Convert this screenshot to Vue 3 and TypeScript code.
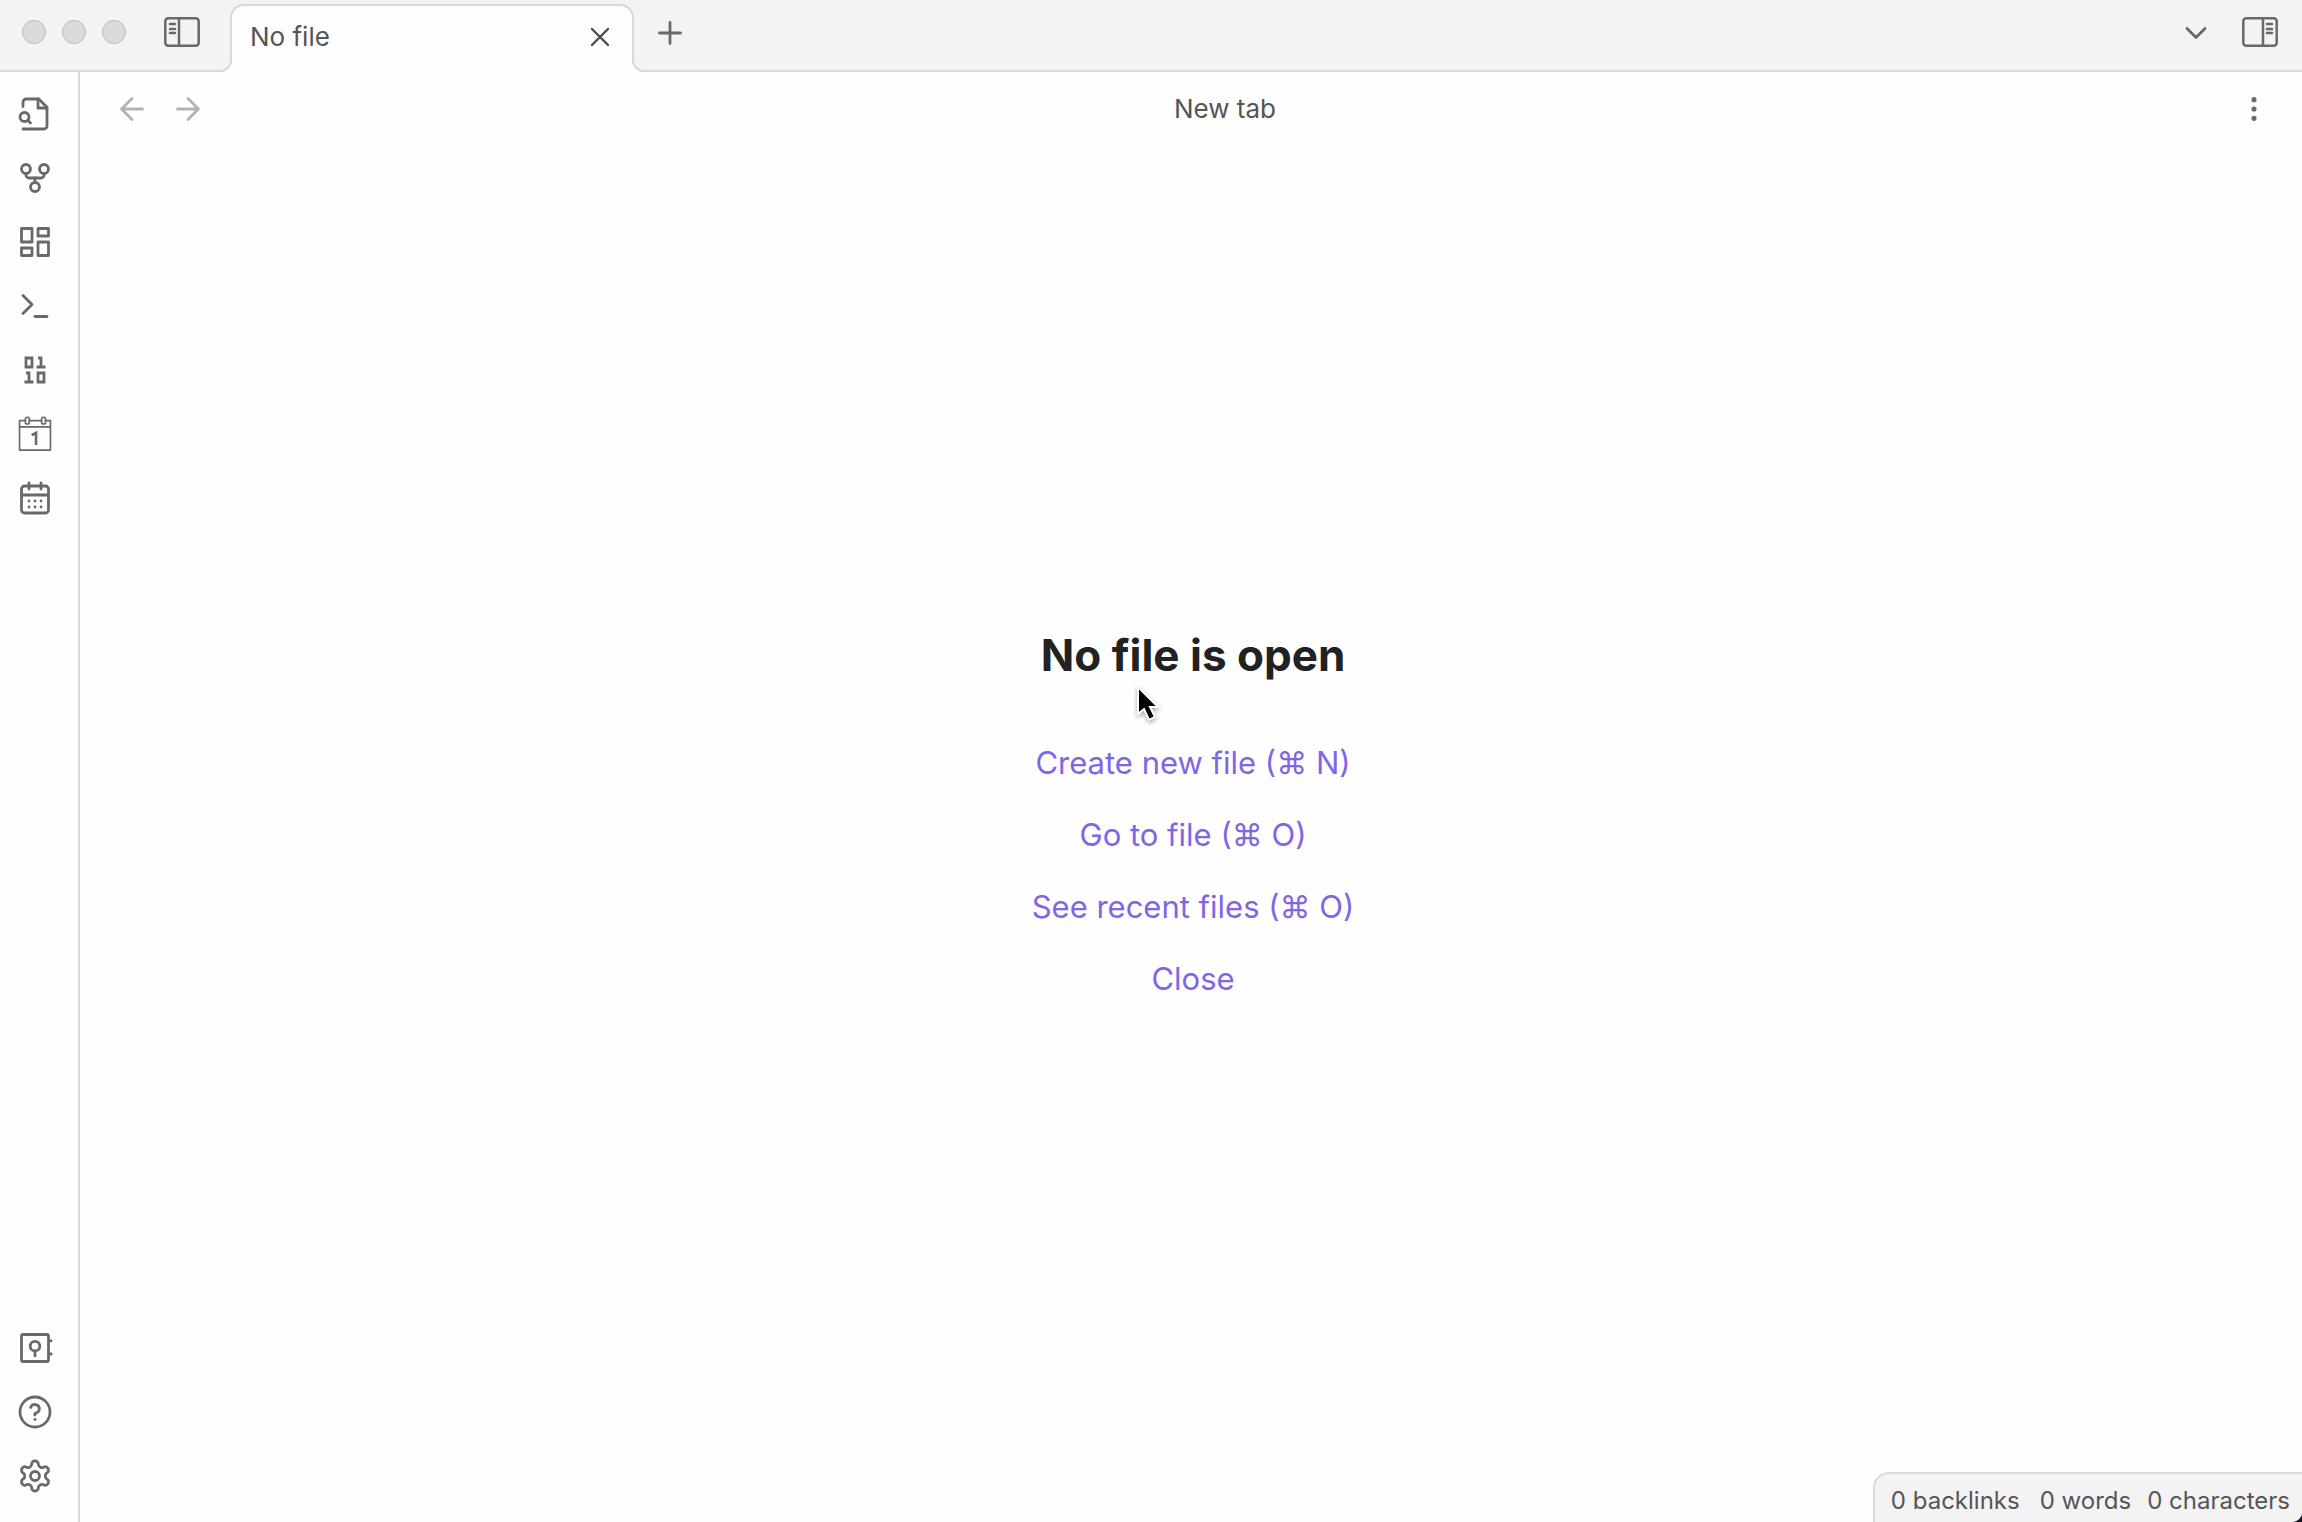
<script setup lang="ts">
interface RibbonAction {
  label: string
  shapes: string
}

const ribbonTop: RibbonAction[] = [
  {
    label: 'Open quick switcher',
    shapes:
      '<path d="M4 22h14a2 2 0 0 0 2-2V7.5L14.5 2H6a2 2 0 0 0-2 2v3"/><path d="M14 2v6h6"/><circle cx="5" cy="14" r="3"/><path d="M9 18l-1.5-1.5"/>',
  },
  {
    label: 'Open graph view',
    shapes:
      '<circle cx="12" cy="18" r="3"/><circle cx="6" cy="6" r="3"/><circle cx="18" cy="6" r="3"/><path d="M18 9v1a2 2 0 0 1-2 2H8a2 2 0 0 1-2-2V9"/><path d="M12 12v3"/>',
  },
  {
    label: 'Create new canvas',
    shapes:
      '<path d="M3 3h7v9H3zM14 3h7v5h-7zM14 12h7v9h-7zM3 16h7v5H3z"/>',
  },
  {
    label: 'Open command palette',
    shapes: '<path d="M4 17l6-6-6-6"/><path d="M12 19h8"/>',
  },
  {
    label: 'Templates',
    shapes:
      '<path stroke-linecap="butt" stroke-linejoin="miter" d="M14 14h4v6h-4zM6 4h4v6H6zM5 20h6M13 10h6M6 14h2v6M14 4h2v6"/>',
  },
  {
    label: "Open today's daily note",
    shapes:
      '<g stroke-width="1.1"><path d="M5.4 3.1H1.7v19.6h20.6V3.1h-3.2M8.2 3.1h8.2"/><path d="M1.7 7.2h20.6"/><rect x="5.6" y="0.8" width="2.6" height="4.5" rx="1.2"/><rect x="16.4" y="0.8" width="2.6" height="4.5" rx="1.2"/></g><path stroke-linecap="butt" stroke-width="1.7" stroke-linejoin="miter" d="M9.8 12.8l2.9-1.6V19.3"/>',
  },
  {
    label: 'Calendar',
    shapes:
      '<rect x="3" y="4" width="18" height="18" rx="2"/><path d="M16 2v4M8 2v4M3 10h18M8 14h.01M12 14h.01M16 14h.01M8 18h.01M12 18h.01M16 18h.01"/>',
  },
]

const ribbonBottom: RibbonAction[] = [
  {
    label: 'Open another vault',
    shapes:
      '<rect x="3" y="3" width="18" height="18" rx="1"/><circle cx="12" cy="10.8" r="3.2"/><path d="M12 14v3.3M22 7.2h.8M22 16h.8"/>',
  },
  {
    label: 'Help',
    shapes:
      '<circle cx="12" cy="12" r="10"/><path d="M9.09 9a3 3 0 0 1 5.83 1c0 2-3 3-3 3v1"/><path d="M12 17h.01"/>',
  },
  {
    label: 'Settings',
    shapes:
      '<path d="M12.22 2h-.44a2 2 0 0 0-2 2v.18a2 2 0 0 1-1 1.73l-.43.25a2 2 0 0 1-2 0l-.15-.08a2 2 0 0 0-2.73.73l-.22.38a2 2 0 0 0 .73 2.73l.15.1a2 2 0 0 1 1 1.72v.51a2 2 0 0 1-1 1.74l-.15.09a2 2 0 0 0-.73 2.73l.22.38a2 2 0 0 0 2.73.73l.15-.08a2 2 0 0 1 2 0l.43.25a2 2 0 0 1 1 1.73V20a2 2 0 0 0 2 2h.44a2 2 0 0 0 2-2v-.18a2 2 0 0 1 1-1.73l.43-.25a2 2 0 0 1 2 0l.15.08a2 2 0 0 0 2.73-.73l.22-.39a2 2 0 0 0-.73-2.73l-.15-.08a2 2 0 0 1-1-1.74v-.5a2 2 0 0 1 1-1.74l.15-.09a2 2 0 0 0 .73-2.73l-.22-.38a2 2 0 0 0-2.73-.73l-.15.08a2 2 0 0 1-2 0l-.43-.25a2 2 0 0 1-1-1.73V4a2 2 0 0 0-2-2z"/><circle cx="12" cy="12" r="3"/>',
  },
]

const emptyActions: string[] = [
  'Create new file (⌘ N)',
  'Go to file (⌘ O)',
  'See recent files (⌘ O)',
  'Close',
]

const statusItems: string[] = ['0 backlinks', '0 words', '0 characters']
</script>

<template>
  <div class="app">
    <header class="titlebar">
      <div class="lights">
        <span class="light"></span>
        <span class="light"></span>
        <span class="light"></span>
      </div>
      <button class="icon-button panel-left" aria-label="Toggle left sidebar">
        <svg class="panel-icon" viewBox="0 0 36 30">
          <rect x="1.3" y="1.3" width="33.4" height="27.4" rx="3" />
          <path d="M15 1v28M6 7h5M6 12h5M6 16h5" />
        </svg>
      </button>
      <div class="tab">
        <span class="tab-title">No file</span>
        <button class="icon-button tab-close" aria-label="Close tab">
          <svg class="icon small" viewBox="0 0 24 24"><path d="M18 6L6 18M6 6l12 12" /></svg>
        </button>
      </div>
      <button class="icon-button" aria-label="New tab">
        <svg class="icon" viewBox="0 0 24 24"><path d="M12 5v14M5 12h14" /></svg>
      </button>
      <div class="titlebar-end">
        <button class="icon-button" aria-label="Tab list">
          <svg class="icon" viewBox="0 0 24 24"><path d="M6 9l6 6 6-6" /></svg>
        </button>
        <button class="icon-button" aria-label="Toggle right sidebar">
          <svg class="panel-icon" viewBox="0 0 36 30">
            <rect x="1.3" y="1.3" width="33.4" height="27.4" rx="3" />
            <path d="M21 1v28M25 7h5M25 12h5M25 16h5" />
          </svg>
        </button>
      </div>
    </header>

    <div class="workspace">
      <nav class="ribbon" aria-label="Ribbon">
        <div class="ribbon-group">
          <button v-for="a in ribbonTop" :key="a.label" class="icon-button" :aria-label="a.label">
            <svg class="icon" viewBox="0 0 24 24" v-html="a.shapes"></svg>
          </button>
        </div>
        <div class="ribbon-group">
          <button v-for="a in ribbonBottom" :key="a.label" class="icon-button" :aria-label="a.label">
            <svg class="icon" viewBox="0 0 24 24" v-html="a.shapes"></svg>
          </button>
        </div>
      </nav>

      <main class="view">
        <div class="view-header">
          <div class="history">
            <button class="icon-button" aria-label="Back" disabled>
              <svg class="icon" viewBox="0 0 24 24"><path d="M19 12H5M12 19l-7-7 7-7" /></svg>
            </button>
            <button class="icon-button" aria-label="Forward" disabled>
              <svg class="icon" viewBox="0 0 24 24"><path d="M5 12h14M12 5l7 7-7 7" /></svg>
            </button>
          </div>
          <div class="view-title">New tab</div>
          <button class="icon-button" aria-label="More options">
            <svg class="icon small" viewBox="0 0 24 24">
              <circle cx="12" cy="5" r="1" /><circle cx="12" cy="12" r="1" /><circle cx="12" cy="19" r="1" />
            </svg>
          </button>
        </div>
        <section class="empty">
          <h1>No file is open</h1>
          <a v-for="label in emptyActions" :key="label" href="#">{{ label }}</a>
        </section>
      </main>
    </div>

    <footer class="status">
      <span v-for="item in statusItems" :key="item">{{ item }}</span>
    </footer>

    <svg class="pointer" viewBox="0 0 32 44" aria-hidden="true">
      <path
        d="M3 2v27l6-5 5 11 6-3-5-10h8z"
        fill="#000"
        stroke="#fff"
        stroke-width="2"
      />
    </svg>
  </div>
</template>

<style>
html,
body {
  background: #14141c;
}
</style>

<style scoped>
.app {
  position: relative;
  display: flex;
  flex-direction: column;
  min-height: 100vh;
  overflow: hidden;
  border-bottom-right-radius: 10px;
  background: #fefefe;
  color: #555;
  font-family: Inter, 'Liberation Sans', sans-serif;
  font-size: 26px;
  line-height: 32px;
}

.icon-button {
  display: flex;
  flex: none;
  align-items: center;
  justify-content: center;
  width: 52px;
  height: 52px;
  padding: 0;
  border: 0;
  background: none;
  color: #696969;
}

.icon-button:disabled {
  color: #b3b3b3;
}

.icon,
.panel-icon {
  width: 36px;
  height: 36px;
  fill: none;
  stroke: currentColor;
  stroke-width: 1.85;
  stroke-linecap: round;
  stroke-linejoin: round;
}

.icon.small {
  width: 32px;
  height: 32px;
}

.panel-icon {
  height: 30px;
  margin-bottom: 2px;
  stroke-width: 2.5;
}

.titlebar {
  display: flex;
  box-sizing: border-box;
  height: 72px;
  padding: 0 16px 0 22px;
  border-bottom: 2px solid #d9d9d9;
  background: #f3f3f3;
}

.titlebar > .icon-button,
.titlebar-end {
  margin-top: 7px;
}

.lights {
  display: flex;
  gap: 16px;
  padding-top: 20px;
}

.light {
  box-sizing: border-box;
  width: 24px;
  height: 24px;
  border: 1px solid #b9b9b9;
  border-radius: 50%;
  background: #dadada;
}

.titlebar > .panel-left {
  margin-right: 22px;
  margin-left: 30px;
}

.tab {
  position: relative;
  display: flex;
  box-sizing: border-box;
  align-items: center;
  justify-content: space-between;
  width: 404px;
  height: 68px;
  margin: 4px 10px -2px 0;
  padding: 0 6px 4px 18px;
  border: 2px solid #d9d9d9;
  border-bottom: 0;
  border-radius: 14px 14px 0 0;
  background: #fefefe;
}

.tab::before,
.tab::after {
  position: absolute;
  bottom: 0;
  box-sizing: border-box;
  width: 12px;
  height: 12px;
  border: 0 solid #d9d9d9;
  background: #f3f3f3;
  content: '';
}

.tab::before {
  right: 100%;
  border-width: 0 2px 2px 0;
  border-bottom-right-radius: 12px;
  box-shadow: 4px 4px 0 #fefefe;
}

.tab::after {
  left: 100%;
  border-width: 0 0 2px 2px;
  border-bottom-left-radius: 12px;
  box-shadow: -4px 4px 0 #fefefe;
}

.tab-close {
  color: #4d4d4d;
}

.titlebar-end {
  display: flex;
  gap: 12px;
  margin-left: auto;
}

.workspace {
  display: flex;
  flex: 1;
}

.ribbon {
  display: flex;
  flex: none;
  flex-direction: column;
  justify-content: space-between;
  box-sizing: border-box;
  width: 80px;
  padding: 16px 0 20px 9px;
  border-right: 2px solid #d9d9d9;
}

.ribbon-group {
  display: flex;
  flex-direction: column;
  gap: 12px;
}

.view {
  display: flex;
  flex: 1;
  flex-direction: column;
}

.view-header {
  display: flex;
  align-items: center;
  gap: 12px;
  height: 74px;
  padding: 0 22px 0 26px;
}

.history {
  display: flex;
  gap: 4px;
  padding-right: 8px;
}

.view-title {
  flex: 1;
  text-align: center;
}

.empty {
  display: flex;
  flex: 1;
  flex-direction: column;
  align-items: center;
  justify-content: center;
  gap: 32px;
  padding: 0 0 44px 4px;
  font-size: 31px;
  line-height: 40px;
}

h1 {
  margin: 0 0 26px;
  color: #222;
  font-size: 44px;
  font-weight: 700;
  line-height: 60px;
}

.empty a {
  color: #8065e6;
  text-decoration: none;
}

.status {
  position: absolute;
  right: 0;
  bottom: 0;
  display: flex;
  box-sizing: border-box;
  gap: 16px;
  height: 50px;
  padding: 11px 12px 0 16px;
  border: solid #d9d9d9;
  border-width: 2px 0 0 2px;
  border-radius: 16px 0 0;
  background: #f3f3f3;
  font-size: 24px;
}

.status span:first-child {
  padding-right: 4px;
}

.pointer {
  position: absolute;
  top: 685px;
  left: 1135px;
  width: 32px;
  height: 44px;
  filter: drop-shadow(0 2px 2px rgb(0 0 0 / 35%));
}
</style>
